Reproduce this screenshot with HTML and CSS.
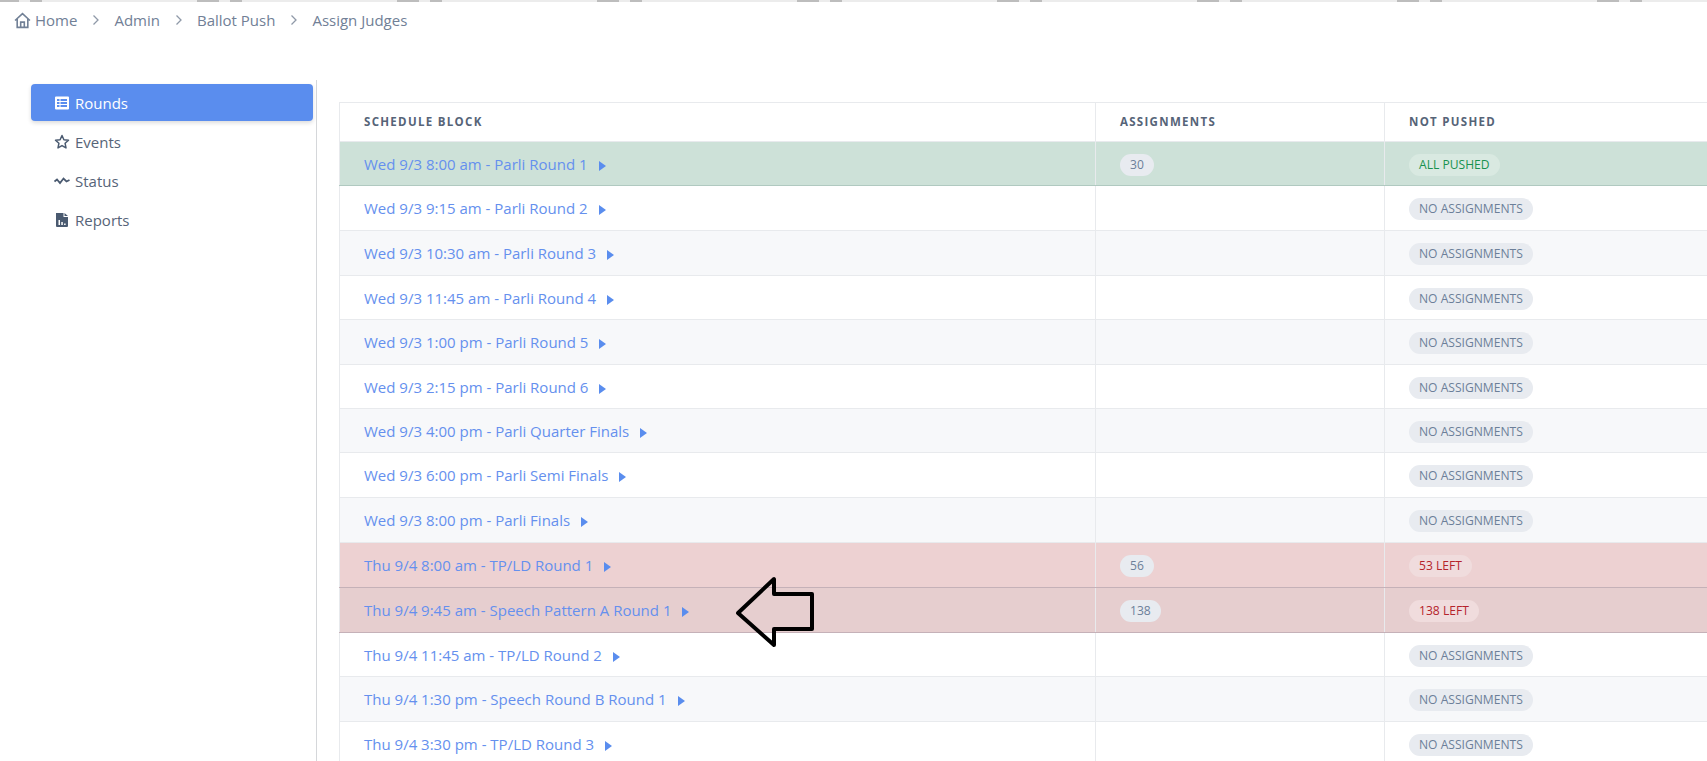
FILE: index.html
```html
<!DOCTYPE html>
<html lang="en">
<head>
<meta charset="utf-8">
<title>Assign Judges</title>
<link rel="stylesheet" href="styles.css">
</head>
<body>
<div class="topline"></div>
<nav class="crumbs">
  <svg class="home" viewBox="0 0 16 16" width="17" height="17"><path d="M1 8 8 1.600 15 8M3 6.500V14.500H13V6.500M6.300 14.500V9.500H9.700V14.500" fill="none" stroke="currentColor" stroke-width="1.500"/></svg>
  <span class="crumb">Home</span><svg class="sep" viewBox="0 0 8 12" width="8" height="12"><path d="M1.500 1.500 6 6 1.500 10.500" fill="none" stroke="currentColor" stroke-width="1.300"/></svg>
  <span class="crumb">Admin</span><svg class="sep" viewBox="0 0 8 12" width="8" height="12"><path d="M1.500 1.500 6 6 1.500 10.500" fill="none" stroke="currentColor" stroke-width="1.300"/></svg>
  <span class="crumb">Ballot Push</span><svg class="sep" viewBox="0 0 8 12" width="8" height="12"><path d="M1.500 1.500 6 6 1.500 10.500" fill="none" stroke="currentColor" stroke-width="1.300"/></svg>
  <span class="crumb">Assign Judges</span>
</nav>
<div class="layout">
  <aside class="side">
    <a class="item active"><svg viewBox="0 0 16 16" width="16" height="16"><path fill="currentColor" fill-rule="evenodd" d="M2 1.500H14A1 1 0 0 1 15 2.500V13.500A1 1 0 0 1 14 14.500H2A1 1 0 0 1 1 13.500V2.500A1 1 0 0 1 2 1.500ZM3 4V6H5.500V4ZM6.500 4V6H13V4ZM3 7V9H5.500V7ZM6.500 7V9H13V7ZM3 10V12H5.500V10ZM6.500 10V12H13V10Z"/></svg><span>Rounds</span></a>
    <a class="item"><svg viewBox="0 0 16 16" width="16" height="16"><path fill="none" stroke="currentColor" stroke-width="1.500" stroke-linejoin="round" d="M8 1.500 9.900 5.700 14.500 6.200 11.100 9.300 12 13.900 8 11.600 4 13.900 4.900 9.300 1.500 6.200 6.100 5.700Z"/></svg><span>Events</span></a>
    <a class="item"><svg viewBox="0 0 16 16" width="16" height="16"><path fill="none" stroke="currentColor" stroke-width="1.800" d="M0.500 8.500 3 6.500 6 10 9.500 5.500 12.500 8.500 15.500 7"/></svg><span>Status</span></a>
    <a class="item"><svg viewBox="0 0 16 16" width="16" height="16"><path fill="currentColor" fill-rule="evenodd" d="M2 1H9.500V5H14V14A1 1 0 0 1 13 15H3A1 1 0 0 1 2 14ZM10.500 1 14 4H10.500ZM4.500 8V13H6V8ZM7.300 10V13H8.800V10ZM10.100 11.500V13H11.600V11.500Z"/></svg><span>Reports</span></a>
  </aside>
  <main class="main">
    <table class="grid">
      <colgroup><col class="c1"><col class="c2"><col class="c3"></colgroup>
      <thead><tr><th>Schedule Block</th><th>Assignments</th><th>Not Pushed</th></tr></thead>
      <tbody>
        <tr class="ok"><td><a>Wed 9/3 8:00 am - Parli Round 1<i class="tri"></i></a></td><td><span class="pill">30</span></td><td><span class="pill green">All Pushed</span></td></tr>
        <tr><td><a>Wed 9/3 9:15 am - Parli Round 2<i class="tri"></i></a></td><td></td><td><span class="pill">No Assignments</span></td></tr>
        <tr class="alt"><td><a>Wed 9/3 10:30 am - Parli Round 3<i class="tri"></i></a></td><td></td><td><span class="pill">No Assignments</span></td></tr>
        <tr><td><a>Wed 9/3 11:45 am - Parli Round 4<i class="tri"></i></a></td><td></td><td><span class="pill">No Assignments</span></td></tr>
        <tr class="alt"><td><a>Wed 9/3 1:00 pm - Parli Round 5<i class="tri"></i></a></td><td></td><td><span class="pill">No Assignments</span></td></tr>
        <tr><td><a>Wed 9/3 2:15 pm - Parli Round 6<i class="tri"></i></a></td><td></td><td><span class="pill">No Assignments</span></td></tr>
        <tr class="alt"><td><a>Wed 9/3 4:00 pm - Parli Quarter Finals<i class="tri"></i></a></td><td></td><td><span class="pill">No Assignments</span></td></tr>
        <tr><td><a>Wed 9/3 6:00 pm - Parli Semi Finals<i class="tri"></i></a></td><td></td><td><span class="pill">No Assignments</span></td></tr>
        <tr class="alt"><td><a>Wed 9/3 8:00 pm - Parli Finals<i class="tri"></i></a></td><td></td><td><span class="pill">No Assignments</span></td></tr>
        <tr class="bad"><td><a>Thu 9/4 8:00 am - TP/LD Round 1<i class="tri"></i></a></td><td><span class="pill">56</span></td><td><span class="pill red">53 Left</span></td></tr>
        <tr class="bad hover"><td><a>Thu 9/4 9:45 am - Speech Pattern A Round 1<i class="tri"></i></a></td><td><span class="pill">138</span></td><td><span class="pill red">138 Left</span></td></tr>
        <tr><td><a>Thu 9/4 11:45 am - TP/LD Round 2<i class="tri"></i></a></td><td></td><td><span class="pill">No Assignments</span></td></tr>
        <tr class="alt"><td><a>Thu 9/4 1:30 pm - Speech Round B Round 1<i class="tri"></i></a></td><td></td><td><span class="pill">No Assignments</span></td></tr>
        <tr><td><a>Thu 9/4 3:30 pm - TP/LD Round 3<i class="tri"></i></a></td><td></td><td><span class="pill">No Assignments</span></td></tr>
      </tbody>
    </table>
  </main>
</div>
<svg class="arrow" viewBox="0 0 80 76" width="80" height="76"><path d="M3 38 39 4V19H77V54H39V70Z" fill="none" stroke="#000" stroke-width="4" stroke-linejoin="round"/></svg>
</body>
</html>
```
FILE: styles.css
```css
html, body { margin: 0; height: 761px; overflow: hidden; background: #fff; }
body { font-family: "Open Sans", "Noto Sans", sans-serif; font-size: 14px; color: #4a5568; position: relative; }
.topline { height: 2px; background: repeating-linear-gradient(90deg, #bdbdbd 0 19px, #ececec 19px 30px, #bdbdbd 30px 42px, #ececec 42px 197px, #bdbdbd 197px 200px); }
.crumbs { display: flex; align-items: center; height: 36px; padding-left: 14px; color: #718096; font-size: 15px; }
.home { margin-right: 4px; }
.sep { margin: 0 14px 0 15px; color: #8f99a8; }
.layout { display: flex; margin-top: 42px; }
.side { width: 282px; margin-left: 31px; padding-right: 3px; padding-top: 4px; border-right: 1px solid #d5d7da; height: 700px; flex: none; }
.item { display: flex; align-items: center; gap: 5px; height: 37px; margin-bottom: 2px; padding-left: 23px; font-size: 15px; color: #566478; border-radius: 4px; }
.item svg { color: #4a5a70; flex: none; }
.item.active { background: #5a8dee; color: #fff; box-shadow: 0 2px 4px rgba(0,0,0,.14); }
.item.active svg { color: #fff; }
.main { flex: 1; padding: 22px 0 0 22px; min-width: 0; }
.grid { border-collapse: collapse; table-layout: fixed; width: 1400px; border: 1px solid #e8eaed; }
.c1 { width: 756px; } .c2 { width: 289px; } .c3 { width: 355px; }
th { height: 37px; padding: 0 0 1px 24px; text-align: left; text-transform: uppercase; font-size: 11.500px; letter-spacing: 1.300px; font-weight: 700; color: #566478; border: 1px solid #e8eaed; }
td { height: 44px; padding: 0 0 0 24px; border: 1px solid #e8eaed; font-size: 15px; }
tbody tr:nth-child(1) td, tbody tr:nth-child(4) td, tbody tr:nth-child(6) td, tbody tr:nth-child(7) td, tbody tr:nth-child(12) td { height: 43px; }
td a { color: #6590ee; }
.tri { display: inline-block; width: 0; height: 0; margin-left: 11px; border-left: 7px solid #5a8dee; border-top: 5px solid transparent; border-bottom: 5px solid transparent; vertical-align: -1px; }
.alt td { background: #f7f8fa; }
.ok td { background: #cde1d8; border-bottom-color: #b0c9c0; }
.bad td { background: #edd1d2; border-bottom-color: #c5b1b8; }
.hover td { background: #e6cecf; }
.pill { display: inline-block; height: 22px; line-height: 22px; margin-top: 2px; padding: 0 10px; border-radius: 11px; background: #e8ebf0; color: #6c7f99; font-size: 12.100px; text-transform: uppercase; vertical-align: middle; }
.green { background: #d9e9e1; color: #18924f; }
.red { background: #f0dcdd; color: #b5232b; }
.arrow { position: absolute; left: 735px; top: 575px; }
```
